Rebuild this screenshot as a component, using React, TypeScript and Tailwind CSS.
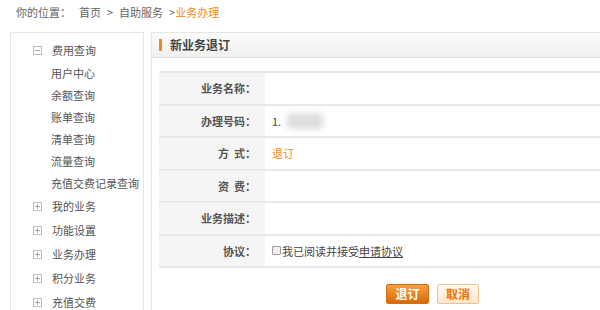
import { ReactNode } from "react";

const font = { fontFamily: '"Noto Sans CJK SC", "Liberation Sans", sans-serif' };

const menu: { label: string; open?: boolean; children?: string[] }[] = [
  {
    label: "费用查询",
    open: true,
    children: ["用户中心", "余额查询", "账单查询", "清单查询", "流量查询", "充值交费记录查询"],
  },
  { label: "我的业务" },
  { label: "功能设置" },
  { label: "业务办理" },
  { label: "积分业务" },
  { label: "充值交费" },
];

function TreeIcon({ open }: { open?: boolean }) {
  return (
    <svg width="9" height="9" viewBox="0 0 9 9" className="shrink-0">
      <rect x="0.5" y="0.5" width="8" height="8" fill="white" stroke="#bdbdbd" />
      <line x1="2" y1="4.5" x2="7" y2="4.5" stroke="#a5a5a5" />
      {!open && <line x1="4.5" y1="2" x2="4.5" y2="7" stroke="#a5a5a5" />}
    </svg>
  );
}

function Row({ label, children }: { label: string; children?: ReactNode }) {
  return (
    <div className="flex h-[32.5px] border-b-2 border-[#e8e8e8]">
      <div className="w-[106px] bg-[#f5f5f5] flex items-center justify-end pr-[9px] text-[11px] font-bold text-[#555] whitespace-pre">
        {label}
      </div>
      <div className="flex-1 flex items-center pl-[7px] text-[11px] text-[#444]">{children}</div>
    </div>
  );
}

export default function App() {
  return (
    <div className="w-[600px] h-[310px] overflow-hidden bg-white" style={font}>
      {/* Breadcrumb */}
      <div className="h-[25px] flex items-center pl-[16px] text-[11px] text-[#666]">
        <span>你的位置：</span>
        <span className="ml-[8px]">首页</span>
        <span className="mx-[6px]">&gt;</span>
        <span>自助服务</span>
        <span className="ml-[6px]">&gt;</span>
        <span className="text-[#f08a1c]">业务办理</span>
      </div>

      <div className="flex gap-[7px] pl-[10px] pt-[7px]">
        {/* Sidebar */}
        <div className="w-[134px] h-[300px] shrink-0 border border-[#e6e6e6] pt-[5px]">
          {menu.map((m) => (
            <div key={m.label}>
              <div className="flex items-center h-[24px] pl-[22px] gap-[10px] text-[11px] text-[#555]">
                <TreeIcon open={m.open} />
                <span>{m.label}</span>
              </div>
              {m.children?.map((c) => (
                <div key={c} className="h-[22px] flex items-center pl-[40px] text-[11px] text-[#555]">
                  {c}
                </div>
              ))}
            </div>
          ))}
        </div>

        {/* Main panel */}
        <div className="w-[480px] shrink-0 border border-[#e6e6e6] h-[300px]">
          <div className="h-[25px] flex items-center pl-[7px] gap-[8px] bg-gradient-to-b from-[#fbfbfb] to-[#f0f0f0] border-b border-[#e2e2e2]">
            <span className="w-[3px] h-[12px] bg-[#f08a1c]" />
            <span className="text-[12px] font-bold text-[#444]">新业务退订</span>
          </div>

          <div className="mt-[13px] ml-[7px] border-t-2 border-[#e8e8e8]">
            <Row label="业务名称：" />
            <Row label="办理号码：">
              <span>1.</span>
              <span className="ml-[6px] w-[36px] h-[16px] bg-[#dedede] blur-[3px] rounded-sm" />
            </Row>
            <Row label="方  式：">
              <span className="text-[#f08a1c]">退订</span>
            </Row>
            <Row label="资  费：" />
            <Row label="业务描述：" />
            <Row label="协议：">
              <span className="w-[9px] h-[9px] border border-[#a0a0a0] bg-[#eee] rounded-[1px] mr-[1px]" />
              <span>我已阅读并接受</span>
              <span className="underline">申请协议</span>
            </Row>
          </div>

          <div className="flex gap-[8px] pl-[234px] mt-[16px]">
            <button className="w-[43px] h-[20px] rounded-[2px] bg-gradient-to-b from-[#f7a03a] to-[#d86a00] border border-[#d07010] text-white text-[12px] font-bold">
              退订
            </button>
            <button className="w-[42px] h-[20px] rounded-[2px] bg-gradient-to-b from-[#fffaf4] to-[#ffe6cc] border border-[#f0c38e] text-[#f07000] text-[12px] font-bold">
              取消
            </button>
          </div>
        </div>
      </div>
    </div>
  );
}
